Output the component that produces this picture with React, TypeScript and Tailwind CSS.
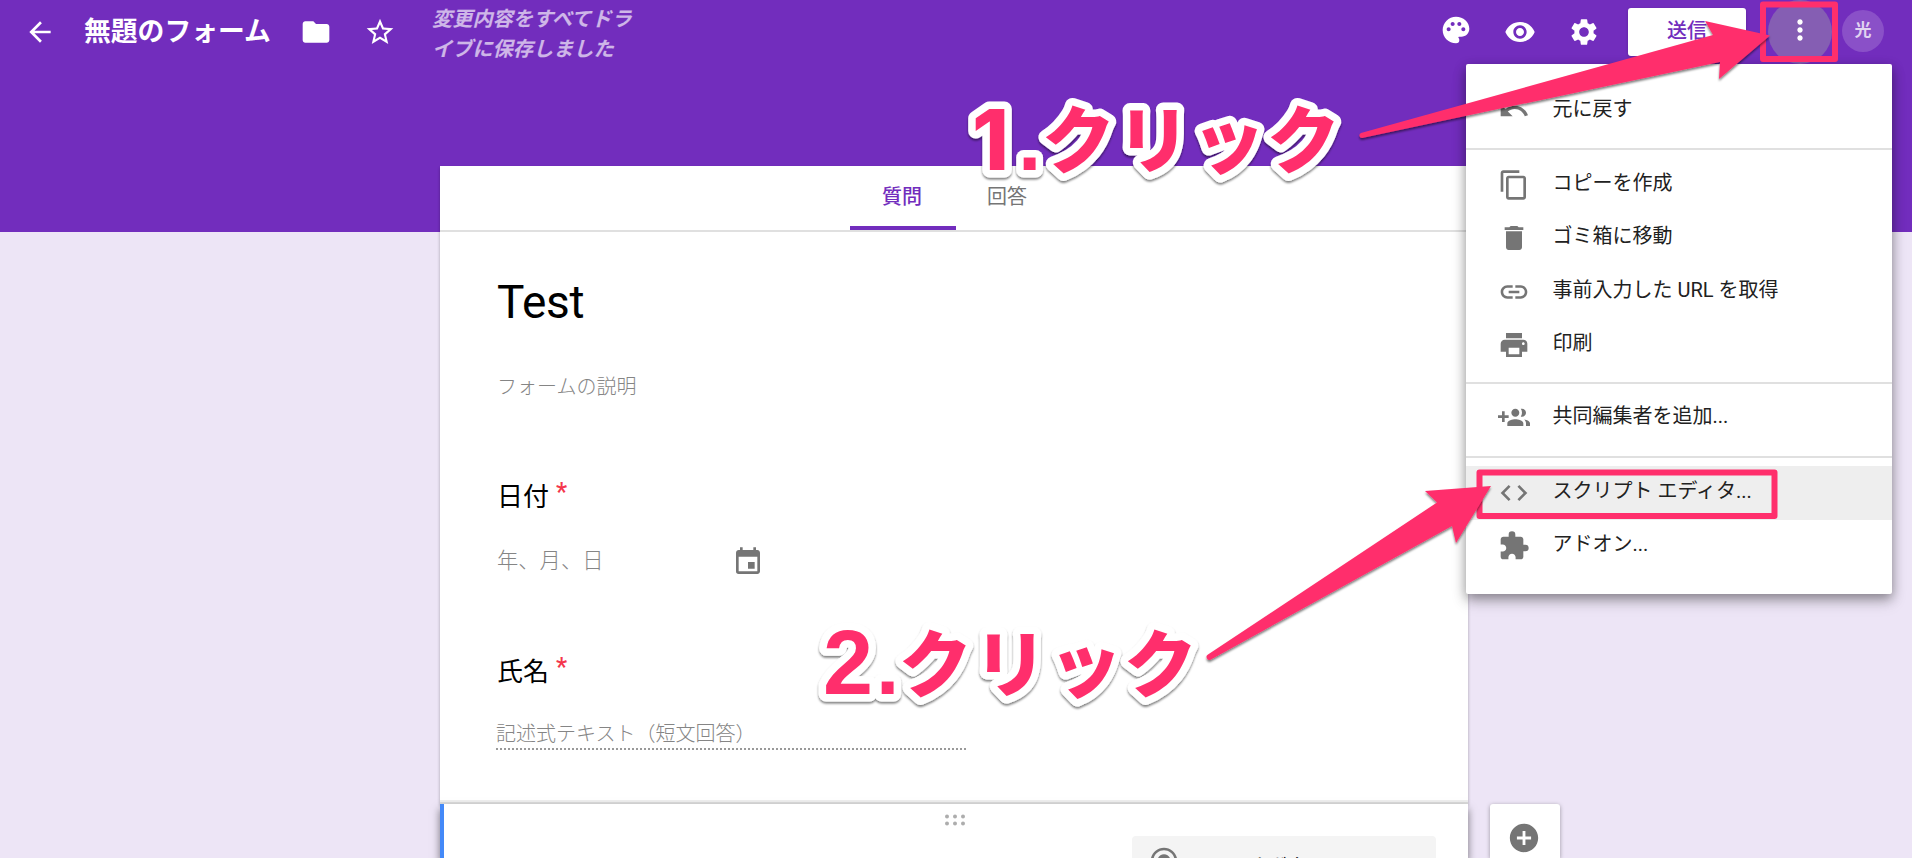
import React from "react";
import {
  MdArrowBack, MdFolder, MdStarBorder, MdPalette, MdVisibility, MdSettings, MdMoreVert,
  MdUndo, MdContentCopy, MdDelete, MdLink, MdPrint, MdCode, MdExtension,
  MdEvent, MdAddCircle, MdRadioButtonChecked,
} from "react-icons/md";

type IconType = React.ComponentType<{ className?: string }>;

const PINK = "#ff2f6c";

function MenuItem({ icon: Icon, label, active }: { icon: IconType; label: string; active?: boolean }) {
  return (
    <div className={`flex h-[53.5px] shrink-0 items-center pl-8 ${active ? "bg-[#eeeeee]" : ""}`}>
      <Icon className="size-8 shrink-0 text-[#757575]" />
      <span className="ml-[22.5px] whitespace-nowrap pb-[4.5px] text-[20px] leading-[30px] text-[#212121]">{label}</span>
    </div>
  );
}

function GroupAdd({ className }: { className?: string }) {
  return (
    <svg viewBox="0 0 24 24" fill="currentColor" className={className}>
      <path d="M8 10H5V7H3v3H0v2h3v3h2v-3h3v-2zm10 1c1.66 0 2.99-1.34 2.99-3S19.66 5 18 5c-.32 0-.63.05-.91.14.57.81.9 1.79.9 2.86s-.34 2.04-.9 2.86c.28.09.59.14.91.14zm-5 0c1.66 0 2.99-1.34 2.99-3S14.66 5 13 5c-1.66 0-3 1.34-3 3s1.34 3 3 3zm6.62 2.16c.83.73 1.38 1.66 1.38 2.84v2h3v-2c0-1.54-2.37-2.49-4.38-2.84zM13 13c-2 0-6 1-6 3v2h12v-2c0-2-4-3-6-3z" />
    </svg>
  );
}

function Rule() {
  return <div className="h-0.5 shrink-0 bg-[#e0e0e0]" />;
}

function OverflowMenu() {
  return (
    <div className="absolute left-[1466px] top-16 flex h-[530px] w-[426px] flex-col rounded-[2px] bg-white shadow-[0_4px_12px_rgba(0,0,0,0.35),0_8px_16px_rgba(0,0,0,0.15)]">
      <div className="pb-[10px] pt-[20.5px]">
        <MenuItem icon={MdUndo} label="元に戻す" />
      </div>
      <Rule />
      <div className="pb-[10px] pt-2">
        <MenuItem icon={MdContentCopy} label="コピーを作成" />
        <MenuItem icon={MdDelete} label="ゴミ箱に移動" />
        <MenuItem icon={MdLink} label="事前入力した URL を取得" />
        <MenuItem icon={MdPrint} label="印刷" />
      </div>
      <Rule />
      <div className="pb-[11px] pt-[7.5px]">
        <MenuItem icon={GroupAdd} label="共同編集者を追加..." />
      </div>
      <Rule />
      <div className="pt-2">
        <MenuItem icon={MdCode} label="スクリプト エディタ..." active />
        <MenuItem icon={MdExtension} label="アドオン..." />
      </div>
    </div>
  );
}

function Header() {
  return (
    <header className="flex h-16 items-center text-white">
      <MdArrowBack className="ml-6 size-8" />
      <h1 className="ml-7 w-[190px] whitespace-nowrap text-[26.8px] font-bold leading-8">無題のフォーム</h1>
      <MdFolder className="ml-[26px] size-8" />
      <MdStarBorder className="ml-8 size-8" />
      <p className="ml-[36px] mt-[3px] w-[207px] text-[20.2px] font-bold italic leading-[30px] text-white/65">
        変更内容をすべてドライブに保存しました
      </p>
      <div className="ml-auto flex items-center">
        <MdPalette className="mb-1 size-8" />
        <MdVisibility className="ml-8 size-8" />
        <MdSettings className="ml-8 size-8" />
        <button className="ml-7 h-12 w-[118px] rounded-[3px] bg-white pb-0.5 text-[20px] font-medium text-[#722dbd] shadow-[0_1px_3px_rgba(0,0,0,0.2)]">送信</button>
        <button className="ml-[22px] flex size-16 items-center justify-center rounded-full bg-[#855eb3]">
          <MdMoreVert className="mb-1 size-8" />
        </button>
        <div className="mb-0.5 ml-[10px] mr-7 flex size-[42px] items-center justify-center rounded-full bg-[#8a50c8] text-[17px] font-bold text-white/75">光</div>
      </div>
    </header>
  );
}

function Question({ title }: { title: string }) {
  return (
    <div className="flex text-[26px] leading-10 text-black">
      {title}
      <span className="ml-[7px] text-[25px] font-medium leading-[32px] text-[#f4364c]">*</span>
    </div>
  );
}

function FormCard() {
  return (
    <section className="h-[638px] w-[1028px] bg-white shadow-[0_2px_3px_rgba(0,0,0,0.3)]">
      <div className="flex h-[66px] justify-center border-b-2 border-[#e0e0e0] text-[20px]">
        <div className="h-16 w-[106px] border-b-4 border-[#722dbd] pr-0.5 pt-[17px] text-center font-medium leading-[28px] text-[#722dbd]">質問</div>
        <div className="h-16 w-[102px] pt-[17px] text-center leading-[28px] text-[#757575]">回答</div>
      </div>
      <div className="pl-[57px]">
        <h2 className="pt-10 text-[46px] font-normal leading-[60px] tracking-[-0.3px] text-black">Test</h2>
        <p className="pt-[40px] text-[20px] font-light leading-[30px] text-[#858585]">フォームの説明</p>
        <div className="pt-[75px]"><Question title="日付" /></div>
        <div className="mt-[28px] flex w-[267px] items-center justify-between text-[21.3px] font-light leading-8 text-[#858585]">
          <span className="mb-0.5">年、月、日</span>
          <MdEvent className="size-8 text-[#757575]" />
        </div>
        <div className="pt-[73px]"><Question title="氏名" /></div>
        <p className="-ml-px mt-[27px] h-[31px] w-[470px] border-b-2 border-dotted border-[#999] text-[20px] font-light leading-[31px] text-[#858585]">記述式テキスト（短文回答）</p>
      </div>
    </section>
  );
}

function EditingCard() {
  return (
    <div className="flex w-[1120px] items-start">
      <section className="h-[54px] w-[1028px] border-l-4 border-[#4489f8] bg-white shadow-[0_5px_8px_rgba(0,0,0,0.5),0_-2px_0_#dadada,0_-4px_0_#eeeeee]">
        <svg viewBox="0 0 22 12" className="ml-[500px] mt-[10px] h-3 w-[22px]" fill="#adadad">
          {[3, 11, 19].map((x) => [2.5, 9.5].map((y) => <circle key={`${x}-${y}`} cx={x} cy={y} r="2" />))}
        </svg>
        <div className="ml-[688px] mt-[10px] flex h-[50px] w-[304px] items-center rounded bg-[#f4f4f4]">
          <MdRadioButtonChecked className="ml-4 size-8 text-[#757575]" />
          <span className="ml-7 pt-3 text-[20px] text-black">ラジオボタン</span>
        </div>
      </section>
      <aside className="ml-[22px] flex h-[54px] w-[70px] justify-center rounded-t-[3px] bg-white pr-0.5 pt-[17px] shadow-[0_1px_4px_rgba(0,0,0,0.35)]">
        <MdAddCircle className="size-[34px] text-[#757575]" />
      </aside>
    </div>
  );
}

const LABELS = [
  { n: "1", font: "Inter", size: 84, weight: 800, xs: [972, 1018, 1042, 1117, 1192, 1267], y: 169.5 },
  { n: "2", font: "Liberation Sans", size: 90, weight: 700, xs: [823, 876, 899, 974, 1049, 1124], y: 693.5 },
];

function StepLabel({ n, font, size, weight, xs, y }: (typeof LABELS)[number]) {
  const kana = ["ク", "リ", "ッ", "ク"];
  const glyphs = (
    <>
      <tspan x={xs[0]} fontFamily={font} fontSize={size} fontWeight={weight}>{n}</tspan>
      <tspan x={xs[1]} fontFamily="Liberation Sans" fontSize="84">.</tspan>
      {kana.map((k, i) => <tspan key={i} x={xs[i + 2]} y={y - 2.5}>{k}</tspan>)}
    </>
  );
  return (
    <g fontFamily="'Noto Sans CJK JP', sans-serif" fontSize="73" fontWeight="900" filter="url(#drop)">
      <text y={y} fill="#fff" stroke="#fff" strokeWidth="15" strokeLinejoin="round">{glyphs}</text>
      <text y={y} fill={PINK}>{glyphs}</text>
    </g>
  );
}

function Annotations() {
  return (
    <svg viewBox="0 0 1912 858" className="pointer-events-none absolute left-0 top-0 h-[858px] w-[1912px]">
      <defs>
        <filter id="drop" filterUnits="userSpaceOnUse" x="0" y="0" width="1912" height="858">
          <feDropShadow dx="0" dy="2" stdDeviation="1.3" floodColor="#000" floodOpacity="0.5" />
        </filter>
      </defs>
      <g fill="none" stroke={PINK} strokeWidth="6" strokeLinejoin="round">
        <rect x="1763" y="4.5" width="72" height="54.5" />
        <rect x="1479.5" y="472.5" width="295" height="43.5" />
      </g>
      <g fill={PINK} filter="url(#drop)">
        <path d="M1361 133L1713 35L1705 21L1770 35.5L1719 79L1720 62L1362 138A2.6 2.6 0 0 1 1361 133Z" />
        <path d="M1208 654.5L1437 502.5L1425 491L1491 486L1456 543L1452 526L1211 659.5A2.8 2.8 0 0 1 1208 654.5Z" />
      </g>
      {LABELS.map((l) => <StepLabel key={l.n} {...l} />)}
    </svg>
  );
}

export default function App() {
  return (
    <div className="relative h-[858px] w-[1912px] overflow-hidden bg-[#ede5f6] font-[Roboto,'Noto_Sans_CJK_JP',sans-serif]">
      <div className="h-[232px] bg-[#722dbd]">
        <Header />
      </div>
      <main className="-mt-[66px] pl-[440px]">
        <FormCard />
        <EditingCard />
      </main>
      <OverflowMenu />
      <Annotations />
    </div>
  );
}
